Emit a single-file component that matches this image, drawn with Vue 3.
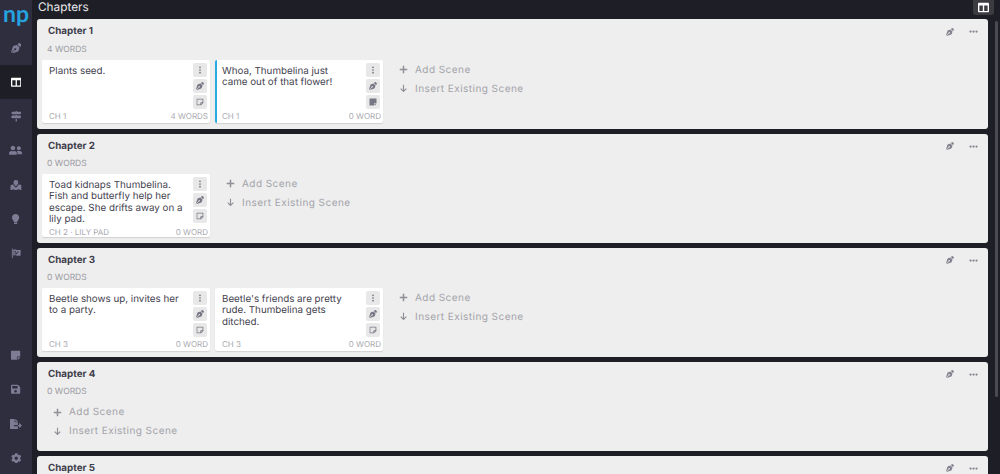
<template>
  <div class="app">
    <aside class="sidebar">
      <div class="logo">np</div>
      <div class="nav-top">
        <div v-for="item in topNav" :key="item" class="nav-item" :class="{ active: item === 'columns' }">
          <svg class="nav-icon" :viewBox="icons[item].box"><path :d="icons[item].d" /></svg>
        </div>
      </div>
      <div class="nav-bottom">
        <div v-for="item in bottomNav" :key="item" class="nav-item">
          <svg class="nav-icon" :viewBox="icons[item].box"><path :d="icons[item].d" /></svg>
        </div>
      </div>
    </aside>

    <main class="main">
      <header class="topbar">
        <h1>Chapters</h1>
        <button class="layout-btn">
          <svg :viewBox="icons.columns.box"><path :d="icons.columns.d" /></svg>
        </button>
      </header>

      <div class="content">
        <section v-for="chapter in chapters" :key="chapter.title" class="chapter">
          <div class="chapter-head">
            <h2>{{ chapter.title }}</h2>
            <div class="chapter-tools">
              <svg class="tool-pen" :viewBox="icons.pen.box"><path :d="icons.pen.d" /></svg>
              <svg class="tool-dots" viewBox="0 0 24 8"><circle cx="4" cy="4" r="3" /><circle cx="12" cy="4" r="3" /><circle cx="20" cy="4" r="3" /></svg>
            </div>
          </div>
          <div class="chapter-words">{{ chapter.words }}</div>

          <div class="chapter-body">
            <article v-for="scene in chapter.scenes" :key="scene.text" class="scene" :class="{ current: scene.current }">
              <div class="scene-main">
                <p>{{ scene.text }}</p>
                <div class="scene-meta">
                  <span>{{ scene.label }}</span>
                  <span>{{ scene.words }}</span>
                </div>
              </div>
              <div class="scene-actions">
                <span class="action">
                  <svg viewBox="0 0 8 24"><circle cx="4" cy="4" r="2.6" /><circle cx="4" cy="12" r="2.6" /><circle cx="4" cy="20" r="2.6" /></svg>
                </span>
                <span class="action">
                  <svg :viewBox="icons.pen.box"><path :d="icons.pen.d" /></svg>
                </span>
                <span class="action">
                  <svg v-if="scene.hasNote" :viewBox="icons.note.box"><path :d="icons.note.d" /></svg>
                  <svg v-else :viewBox="icons.noteOutline.box"><path :d="icons.noteOutline.d" /></svg>
                </span>
              </div>
            </article>

            <div class="scene-links">
              <div class="scene-link">
                <svg viewBox="0 0 24 24"><path d="M10 2h4v8h8v4h-8v8h-4v-8H2v-4h8z" /></svg>
                <span>Add Scene</span>
              </div>
              <div class="scene-link">
                <svg viewBox="0 0 24 24"><path d="M10.5 2h3v14l5-5 2 2-8.500 9L3.500 13l2-2 5 5z" /></svg>
                <span>Insert Existing Scene</span>
              </div>
            </div>
          </div>
        </section>
      </div>
    </main>
    <div class="scrollbar"></div>
  </div>
</template>

<script setup>
const icons = {
  pen: { box: '0 0 512 512', d: 'M136.6 138.79a64 64 0 0 0-43.31 41.35L0 460l14.69 14.69L164.8 324.58c-2.99-6.26-4.8-13.18-4.8-20.58 0-26.51 21.49-48 48-48s48 21.49 48 48-21.49 48-48 48c-7.4 0-14.32-1.81-20.58-4.8L37.31 497.31 52 512l279.86-93.29a64 64 0 0 0 41.35-43.31L416 224 288 96l-151.4 42.79zm361.34-64.62l-60.11-60.11c-18.75-18.75-49.16-18.75-67.91 0l-56.55 56.55 128.02 128.02 56.55-56.55c18.75-18.75 18.75-49.15 0-67.91z' },
  columns: { box: '0 0 512 512', d: 'M464 32H48C21.49 32 0 53.49 0 80v352c0 26.51 21.49 48 48 48h416c26.51 0 48-21.49 48-48V80c0-26.51-21.49-48-48-48zM224 416H64V160h160v256zm224 0H288V160h160v256z' },
  signs: { box: '0 0 512 512', d: 'M507.31 84.69L464 41.37c-6-6-14.14-9.37-22.63-9.37H288V16c0-8.84-7.16-16-16-16h-32c-8.84 0-16 7.16-16 16v16H56c-13.25 0-24 10.75-24 24v80c0 13.25 10.75 24 24 24h385.37c8.49 0 16.63-3.37 22.63-9.37l43.31-43.31c6.25-6.26 6.25-16.38 0-22.63zM224 496c0 8.84 7.16 16 16 16h32c8.84 0 16-7.16 16-16V384h-64v112zm232-272H288v-32h-64v32H70.63c-8.49 0-16.63 3.37-22.63 9.37L4.69 276.69c-6.25 6.25-6.25 16.38 0 22.63L48 342.63c6 6 14.14 9.37 22.63 9.37H456c13.25 0 24-10.75 24-24v-80c0-13.25-10.75-24-24-24z' },
  users: { box: '0 0 640 512', d: 'M192 256c61.9 0 112-50.1 112-112S253.9 32 192 32 80 82.1 80 144s50.1 112 112 112zm76.8 32h-8.3c-20.8 10-43.9 16-68.5 16s-47.6-6-68.5-16h-8.3C51.6 288 0 339.6 0 403.2V432c0 26.5 21.5 48 48 48h288c26.5 0 48-21.5 48-48v-28.8c0-63.6-51.6-115.2-115.2-115.2zM480 256c53 0 96-43 96-96s-43-96-96-96-96 43-96 96 43 96 96 96zm48 32h-3.8c-13.9 4.8-28.6 8-44.2 8s-30.3-3.2-44.2-8H432c-20.4 0-39.2 5.9-55.7 15.4 24.4 26.3 39.7 61.2 39.700 99.800v38.400c0 2.200-.5 4.300-.6 6.400H592c26.500 0 48-21.500 48-48 0-61.900-50.100-112-112-112z' },
  map: { box: '0 1 24 21.400', d: 'M12 1a5 5 0 0 1 5 5c0 2.500-3 6-5 8-2-2-5-5.500-5-8a5 5 0 0 1 5-5zM5 10h1.500c1 2 3 4.500 5.500 7 2.500-2.500 4.500-5 5.500-7H19l4 1v11l-6-2-5 2-5-2-6 2V12z' },
  bulb: { box: '0 0 352 512', d: 'M96.06 454.35c.01 6.29 1.87 12.45 5.37 17.69l17.09 25.69a31.99 31.99 0 0 0 26.64 14.28h61.71a31.99 31.99 0 0 0 26.64-14.28l17.09-25.69a31.989 31.989 0 0 0 5.36-17.69l.04-38.35H96.01l.05 38.35zM0 176c0 44.37 16.45 84.85 43.56 115.78 16.52 18.85 42.36 58.23 52.21 91.45.04.26.07.52.11.78h160.240c.04-.26.07-.51.11-.78 9.850-33.220 35.690-72.600 52.210-91.450C335.550 260.850 352 220.370 352 176 352 78.610 272.900-.3 175.450 0 73.440.31 0 82.970 0 176z' },
  flag: { box: '0 0 24 24', d: 'M2 1h2v22H2zM5 4c5-2 9 2 17 0v13c-8 2-12-2-17 0zm3 3v3h3V7zm6 1v3h3V8zm-3 3v3h3v-3zm-3 2v2h3v-3z' },
  note: { box: '0 0 448 512', d: 'M312 320h136V56c0-13.3-10.700-24-24-24H24C10.700 32 0 42.700 0 56v400c0 13.300 10.700 24 24 24h264V344c0-13.200 10.800-24 24-24zm129 55l-98 98c-4.500 4.500-10.600 7-17 7h-6V352h128v6.100c0 6.300-2.500 12.400-7 16.900z' },
  noteOutline: { box: '0 0 24 24', d: 'M4 2h16a2 2 0 0 1 2 2v11l-7 7H4a2 2 0 0 1-2-2V4a2 2 0 0 1 2-2zm0 2.500V19.500h9V15a2 2 0 0 1 2-2h4.500V4.500zM15.500 15.500v3l3-3z' },
  save: { box: '0 0 448 512', d: 'M433.941 129.941l-83.882-83.882A48 48 0 0 0 316.118 32H48C21.490 32 0 53.490 0 80v352c0 26.510 21.490 48 48 48h352c26.510 0 48-21.490 48-48V163.882a48 48 0 0 0-14.059-33.941zM224 416c-35.346 0-64-28.654-64-64 0-35.346 28.654-64 64-64s64 28.654 64 64c0 35.346-28.654 64-64 64zm96-304.520V212c0 6.627-5.373 12-12 12H76c-6.627 0-12-5.373-12-12V108c0-6.627 5.373-12 12-12h228.520c3.183 0 6.235 1.264 8.485 3.515l3.480 3.480A11.996 11.996 0 0 1 320 111.480z' },
  fileExport: { box: '0 0 576 512', d: 'M384 121.900c0-6.300-2.500-12.400-7-16.900L279.100 7c-4.500-4.500-10.600-7-17-7H256v128h128zM571 308l-95.700-96.400c-10.100-10.100-27.400-3-27.400 11.300V288h-64v64h64v65.200c0 14.300 17.300 21.400 27.400 11.300L571 332c6.600-6.600 6.600-17.400 0-24zm-379 28v-32c0-8.800 7.200-16 16-16h176V160H248c-13.200 0-24-10.800-24-24V0H24C10.700 0 0 10.700 0 24v464c0 13.300 10.700 24 24 24h336c13.300 0 24-10.700 24-24V352H208c-8.800 0-16-7.200-16-16z' },
  cog: { box: '0 0 512 512', d: 'M487.400 315.700l-42.600-24.600c4.300-23.200 4.300-47 0-70.200l42.600-24.600c4.900-2.800 7.100-8.600 5.500-14-11.100-35.600-30-67.800-54.700-94.600-3.800-4.100-10-5.100-14.800-2.300L380.800 110c-17.900-15.400-38.500-27.300-60.800-35.100V25.800c0-5.600-3.900-10.500-9.400-11.700-36.700-8.200-74.300-7.800-109.200 0-5.500 1.200-9.400 6.100-9.400 11.700V75c-22.200 7.900-42.800 19.800-60.800 35.100L88.700 85.500c-4.900-2.800-11-1.900-14.800 2.300-24.700 26.700-43.600 58.900-54.700 94.600-1.700 5.400.6 11.200 5.500 14L67.300 221c-4.300 23.200-4.300 47 0 70.200l-42.600 24.600c-4.900 2.800-7.100 8.600-5.500 14 11.100 35.600 30 67.800 54.700 94.600 3.800 4.100 10 5.100 14.800 2.300l42.600-24.600c17.900 15.400 38.500 27.300 60.800 35.100v49.200c0 5.600 3.900 10.500 9.400 11.700 36.700 8.200 74.300 7.800 109.200 0 5.500-1.200 9.400-6.100 9.400-11.700v-49.200c22.200-7.900 42.800-19.800 60.800-35.100l42.600 24.600c4.900 2.800 11 1.900 14.800-2.300 24.700-26.700 43.600-58.900 54.700-94.600 1.500-5.500-.7-11.300-5.600-14.100zM256 336c-44.100 0-80-35.900-80-80s35.900-80 80-80 80 35.900 80 80-35.900 80-80 80z' }
}

const topNav = ['pen', 'columns', 'signs', 'users', 'map', 'bulb', 'flag']
const bottomNav = ['note', 'save', 'fileExport', 'cog']

const chapters = [
  {
    title: 'Chapter 1',
    words: '4 WORDS',
    scenes: [
      { text: 'Plants seed.', label: 'CH 1', words: '4 WORDS' },
      { text: 'Whoa, Thumbelina just\ncame out of that flower!', label: 'CH 1', words: '0 WORD', current: true, hasNote: true }
    ]
  },
  {
    title: 'Chapter 2',
    words: '0 WORDS',
    scenes: [
      { text: 'Toad kidnaps Thumbelina. Fish and butterfly help her escape. She drifts away on a lily pad.', label: 'CH 2 · LILY PAD', words: '0 WORD' }
    ]
  },
  {
    title: 'Chapter 3',
    words: '0 WORDS',
    scenes: [
      { text: 'Beetle shows up, invites her to a party.', label: 'CH 3', words: '0 WORD' },
      { text: "Beetle's friends are pretty rude. Thumbelina gets ditched.", label: 'CH 3', words: '0 WORD' }
    ]
  },
  { title: 'Chapter 4', words: '0 WORDS', scenes: [] },
  { title: 'Chapter 5', words: '0 WORDS', scenes: [] }
]
</script>

<style>
html, body {
  margin: 0;
  height: 100%;
  overflow: hidden;
  background: #1e1f26;
}
</style>

<style scoped>
.app {
  position: relative;
  display: flex;
  width: 1000px;
  height: 474px;
  overflow: hidden;
  background: #1e1f26;
  font-family: "Inter", sans-serif;
  text-rendering: geometricPrecision;
}

.scrollbar {
  position: absolute;
  top: 21px;
  right: 2px;
  width: 3px;
  height: 376px;
  border-radius: 2px;
  background: #4a4a52;
}

.sidebar {
  width: 32px;
  flex: none;
  display: flex;
  flex-direction: column;
  background: #2f2e3e;
}

.logo {
  height: 31px;
  flex: none;
  color: #25a3e0;
  font-family: "Lato", sans-serif;
  font-size: 23px;
  font-weight: 700;
  line-height: 27px;
  text-align: center;
}

.nav-top {
  flex: none;
  display: flex;
  flex-direction: column;
}

.nav-bottom {
  flex: none;
  margin-top: 68px;
  display: flex;
  flex-direction: column;
}

.nav-item {
  height: 34.200px;
  display: flex;
  align-items: center;
  justify-content: center;
}

.nav-item.active {
  background: #1e1f26;
}

.nav-icon {
  height: 10.500px;
  width: auto;
  fill: #7e7b94;
}

.nav-item.active .nav-icon {
  fill: #fff;
}

.main {
  flex: 1;
  min-width: 0;
  padding-left: 5px;
  padding-right: 12px;
}

.topbar {
  height: 19.400px;
  display: flex;
  justify-content: space-between;
  margin-right: -6px;
}

.topbar h1 {
  margin: 0 0 0 1px;
  color: #e8e8ec;
  font-size: 11.800px;
  font-weight: 400;
  line-height: 15px;
}

.layout-btn {
  width: 21px;
  height: 15px;
  padding: 0;
  border: 0;
  border-radius: 0 0 3px 3px;
  background: #3b3b40;
  display: flex;
  align-items: center;
  justify-content: center;
}

.layout-btn svg {
  width: 11px;
  height: 11px;
  fill: #fff;
}

.content {
  display: flex;
  flex-direction: column;
  gap: 5px;
}

.chapter {
  width: 951px;
  box-sizing: border-box;
  padding: 5.500px 5px;
  border-radius: 3px;
  background: #eeeeee;
}

.chapter-head {
  height: 14px;
  padding-left: 6px;
  display: flex;
  align-items: center;
  justify-content: space-between;
}

.chapter-head h2 {
  margin: 0;
  color: #3f3e4c;
  font-size: 9.800px;
  font-weight: 700;
}

.chapter-tools {
  display: flex;
  align-items: center;
  gap: 15px;
  padding-right: 5px;
}

.tool-pen {
  width: 8px;
  height: 8px;
  fill: #85838f;
}

.tool-dots {
  width: 9px;
  height: 3px;
  fill: #85838f;
}

.chapter-words {
  height: 16px;
  margin-top: 3px;
  padding-left: 5px;
  color: #9b9ba3;
  font-size: 8.500px;
  line-height: 16px;
}

.chapter-body {
  display: flex;
  flex-wrap: wrap;
  gap: 5px;
  margin-top: 2.200px;
}

.scene {
  width: 168px;
  height: 63px;
  box-sizing: border-box;
  padding: 3px 2px 0 7px;
  display: flex;
  border-radius: 2px;
  background: #fff;
  box-shadow: 0 1px 1px rgba(0, 0, 0, .12);
}

.scene.current {
  padding-left: 5px;
  border-left: 2px solid #29aae3;
}

.scene-main {
  flex: 1;
  min-width: 0;
  display: flex;
  flex-direction: column;
  justify-content: space-between;
}

.scene-main p {
  margin: 2.500px 0 0;
  color: #44434f;
  font-size: 9.800px;
  line-height: 11.500px;
  white-space: pre-line;
}

.scene-meta {
  width: 159px;
  height: 13px;
  display: flex;
  justify-content: space-between;
  color: #a9a9af;
  font-size: 8px;
  line-height: 13px;
}

.scene-actions {
  width: 14px;
  margin-left: 4px;
  margin-right: 1px;
  display: flex;
  flex-direction: column;
  gap: 2px;
}

.action {
  width: 14px;
  height: 14px;
  display: flex;
  align-items: center;
  justify-content: center;
  border-radius: 2px;
  background: #e8e8e8;
}

.action svg {
  width: 8px;
  height: 8px;
  fill: #777684;
}

.scene-links {
  padding: 0 0 4.500px 11px;
  display: flex;
  flex-direction: column;
}

.scene-link {
  height: 19px;
  display: flex;
  align-items: center;
  gap: 7px;
  color: #a3a3aa;
  font-size: 10px;
  letter-spacing: .45px;
}

.scene-link svg {
  width: 9px;
  height: 9px;
  fill: #8f8f97;
}
</style>
